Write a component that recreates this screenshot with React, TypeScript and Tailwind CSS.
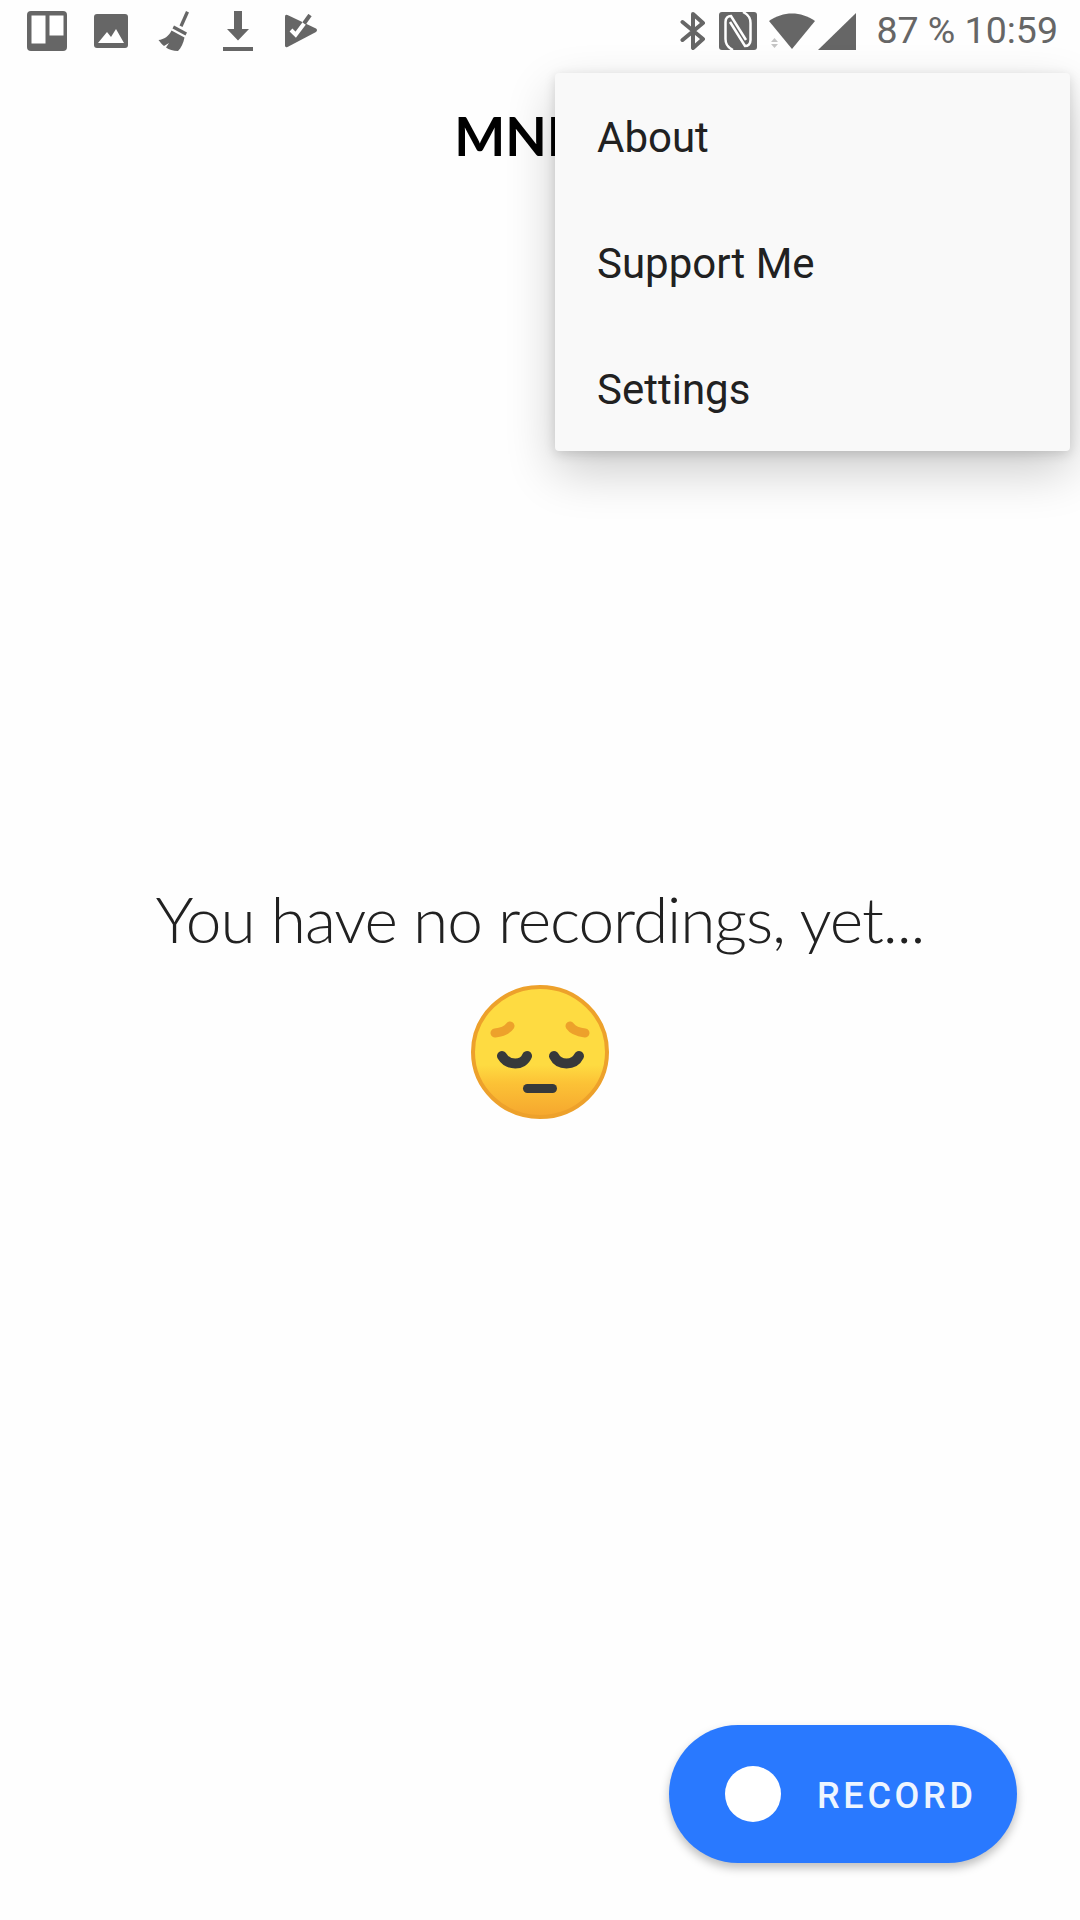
import React from 'react'

const GRAY = '#666666'

// status bar notification icons, drawn in screen pixels
const BoardIcon = () => (
    <svg width="40" height="40" viewBox="0 0 40 40" className="shrink-0">
        <rect width="40" height="40" rx="4" fill={GRAY} />
        <rect x="4.5" y="4.5" width="14" height="28" fill="#fff" />
        <rect x="22.5" y="4.5" width="14" height="20" fill="#fff" />
    </svg>
)

const PhotoIcon = () => (
    <svg width="34" height="34" viewBox="0 0 34 34" className="shrink-0">
        <rect width="34" height="34" rx="3" fill={GRAY} />
        <path d="M4 29 L13 18 L17 23 L22 15 L30 29 Z" fill="#fff" />
    </svg>
)

const BroomIcon = () => (
    <svg width="34" height="42" viewBox="0 0 34 42" className="shrink-0">
        <path d="M28 1 L31 2.500 L24.500 17 L21.500 15.500 Z" fill={GRAY} />
        <path d="M16 15.500 L29 22.500 L27.500 25.500 L14.500 18.500 Z" fill={GRAY} />
        <path d="M13.500 20.500 L26.500 27.500 C25.500 33 23 38 20 41 C15 41 11 39.500 8 37.500 L11 33 L6 36 C4 34.500 2 32 0.500 30 C6 29.500 11 26 13.500 20.500 Z" fill={GRAY} />
    </svg>
)

const DownloadIcon = () => (
    <svg width="30" height="40" viewBox="0 0 30 40" className="shrink-0">
        <path d="M11 0 H19 V18 H26 L15 29.500 L4 18 H11 Z" fill={GRAY} />
        <rect y="36" width="30" height="4" fill={GRAY} />
    </svg>
)

const TasksIcon = () => (
    <svg width="33" height="34" viewBox="0 0 33 34" className="shrink-0">
        <path d="M0 2.500 Q0 0 2.500 1 L31 14.500 Q33 16 31 18 L2.500 33 Q0 34 0 31.500 Z" fill={GRAY} />
        <path d="M6 16 L10.700 20.700 L19.500 9" fill="none" stroke="#fff" strokeWidth="4" />
        <path d="M19 9.500 L25 1" fill="none" stroke={GRAY} strokeWidth="4" />
    </svg>
)

const BluetoothIcon = () => (
    <svg width="26" height="38" viewBox="0 0 26 38" className="shrink-0">
        <path d="M2.500 10 L23 27 L13 36 V2 L23 11 L2.500 28" fill="none" stroke={GRAY} strokeWidth="4" strokeLinejoin="round" strokeLinecap="round" />
    </svg>
)

const NfcIcon = () => (
    <svg width="38" height="38" viewBox="0 0 38 38" className="shrink-0">
        <rect width="38" height="38" rx="3" fill={GRAY} />
        <path d="M14 38 C8 35 6.500 32 6.500 27 V10 C6.500 6 9 4 12 4 L27 28" fill="none" stroke="#fff" strokeWidth="2.500" />
        <path d="M24 0 C30 3 31.500 6 31.500 11 V28 C31.500 32 29 34 26 34 L11 10" fill="none" stroke="#fff" strokeWidth="2.500" />
    </svg>
)

const WifiIcon = () => (
    <svg width="46" height="37" viewBox="0 0 46 37" className="shrink-0">
        <path d="M0 8 C14 -2 32 -2 46 8 L23 36 Z" fill={GRAY} />
        <path d="M5.500 25 L9 29 H2 Z" fill="#c4c4c4" />
        <path d="M2 31 H9 L5.500 35 Z" fill="#c4c4c4" />
    </svg>
)

const SignalIcon = () => (
    <svg width="38" height="37" viewBox="0 0 38 37" className="shrink-0">
        <path d="M38 0 V37 H0 Z" fill={GRAY} />
    </svg>
)

const SadFace = () => (
    <svg width="138" height="134" viewBox="0 0 138 134">
        <defs>
            <linearGradient id="face" x1="0" y1="0" x2="0" y2="1">
                <stop offset="0.6" stopColor="#fedb41" />
                <stop offset="0.74" stopColor="#fcc236" />
                <stop offset="1" stopColor="#f5a62e" />
            </linearGradient>
        </defs>
        <ellipse cx="69" cy="67" rx="67" ry="65" fill="url(#face)" stroke="#eda12b" strokeWidth="4" />
        <path d="M24 48 C32 47 37 44 39 41" fill="none" stroke="#eda12b" strokeWidth="9" strokeLinecap="round" />
        <path d="M114 48 C106 47 101 44 99 41" fill="none" stroke="#eda12b" strokeWidth="9" strokeLinecap="round" />
        <path d="M31 71 C37 81 52 81 56 71" fill="none" stroke="#37393b" strokeWidth="10" strokeLinecap="round" />
        <path d="M83 71 C88 81 103 81 108 71" fill="none" stroke="#37393b" strokeWidth="10" strokeLinecap="round" />
        <rect x="52" y="99" width="34" height="9" rx="4.500" fill="#37393b" />
    </svg>
)

const MENU_ITEMS = ['About', 'Support Me', 'Settings']

const App: React.FC = () => {
    return (
        <div className="relative flex h-[1920px] w-[1080px] flex-col overflow-hidden bg-[#fefefe] font-['Roboto',sans-serif]">
            {/* status bar */}
            <div className="flex h-[62px] items-center justify-between pl-[27px] pr-[22px]">
                <div className="flex items-center">
                    <BoardIcon />
                    <div className="ml-[27px]"><PhotoIcon /></div>
                    <div className="ml-[30px]"><BroomIcon /></div>
                    <div className="ml-[31px]"><DownloadIcon /></div>
                    <div className="ml-[32px]"><TasksIcon /></div>
                </div>
                <div className="flex items-center">
                    <BluetoothIcon />
                    <div className="ml-[13px]"><NfcIcon /></div>
                    <div className="ml-[12px]"><WifiIcon /></div>
                    <div className="ml-[3px]"><SignalIcon /></div>
                    <span className="ml-[20px] whitespace-nowrap text-[37.500px] leading-none text-[#666666]">87 % 10:59</span>
                </div>
            </div>

            {/* title */}
            <div className="flex h-[148px] items-center justify-center">
                <h1 className="font-['Lato',sans-serif] text-[54px] font-bold leading-none text-black">MNML</h1>
            </div>

            {/* empty state */}
            <div className="flex flex-col items-center pt-[671px]">
                <p className="font-['Lato',sans-serif] text-[64px] font-light leading-[76px] tracking-[-1.1px] text-[#212121]">You have no recordings, yet...</p>
                <div className="mt-[28px]"><SadFace /></div>
            </div>

            {/* overflow menu */}
            <div className="absolute left-[555px] top-[73px] flex w-[515px] flex-col rounded-[4px] bg-[#f9f9f9] shadow-[0_20px_50px_rgba(0,0,0,0.2),0_3px_12px_rgba(0,0,0,0.14)]">
                {MENU_ITEMS.map((item) => (
                    <div key={item} className="flex h-[126px] items-center pl-[42px] pt-[2px] text-[42px] text-[#212121]">
                        {item}
                    </div>
                ))}
            </div>

            {/* record button */}
            <button className="absolute left-[669px] top-[1725px] flex h-[138px] w-[348px] items-center rounded-full bg-[#2979ff] pl-[56px] shadow-[0_5px_10px_rgba(0,0,0,0.25)]">
                <span className="h-[56px] w-[56px] rounded-full bg-white" />
                <span className="ml-[36px] mt-[3px] text-[36px] font-medium leading-none tracking-[3.7px] text-[#eef5ff]">RECORD</span>
            </button>
        </div>
    )
}

export default App
